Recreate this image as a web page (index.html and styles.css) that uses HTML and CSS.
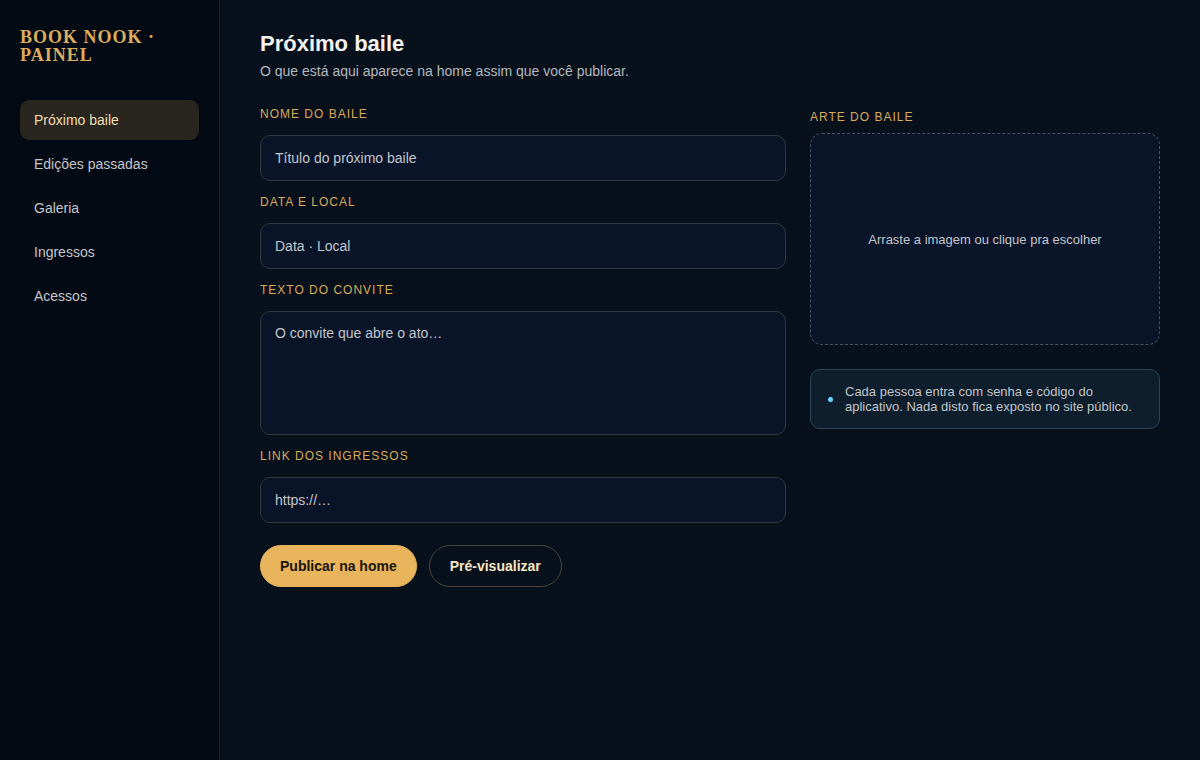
FILE: index.html
```html
<!DOCTYPE html>
<html lang="pt-BR">
<head>
<meta charset="utf-8">
<title>Book Nook · Painel</title>
<link rel="stylesheet" href="styles.css">
</head>
<body>
<div class="app">
  <aside class="sidebar">
    <div class="brand">BOOK NOOK ·<br>PAINEL</div>
    <nav class="nav">
      <a class="nav-item active">Próximo baile</a>
      <a class="nav-item">Edições passadas</a>
      <a class="nav-item">Galeria</a>
      <a class="nav-item">Ingressos</a>
      <a class="nav-item">Acessos</a>
    </nav>
  </aside>
  <main class="main">
    <h1 class="title">Próximo baile</h1>
    <p class="subtitle">O que está aqui aparece na home assim que você publicar.</p>
    <div class="grid">
      <div class="form">
        <div class="field">
          <label class="label">NOME DO BAILE</label>
          <div class="input">Título do próximo baile</div>
        </div>
        <div class="field">
          <label class="label">DATA E LOCAL</label>
          <div class="input">Data · Local</div>
        </div>
        <div class="field">
          <label class="label">TEXTO DO CONVITE</label>
          <div class="input textarea">O convite que abre o ato…</div>
        </div>
        <div class="field">
          <label class="label">LINK DOS INGRESSOS</label>
          <div class="input">https://…</div>
        </div>
        <div class="actions">
          <button class="btn primary">Publicar na home</button>
          <button class="btn ghost">Pré-visualizar</button>
        </div>
      </div>
      <div class="side">
        <label class="label">ARTE DO BAILE</label>
        <div class="dropzone">Arraste a imagem ou clique pra escolher</div>
        <div class="info">
          <span class="dot"></span>
          <span class="info-text">Cada pessoa entra com senha e código do aplicativo. Nada disto fica exposto no site público.</span>
        </div>
      </div>
    </div>
  </main>
</div>
</body>
</html>
```

FILE: styles.css
```css
* { box-sizing: border-box; }
html, body { margin: 0; padding: 0; }
body {
  width: 1200px;
  height: 760px;
  background: #07101b;
  font-family: "Liberation Sans", Arial, sans-serif;
  color: #e8e6e1;
  overflow: hidden;
}
.app { display: flex; height: 760px; }
.sidebar {
  width: 220px;
  flex: none;
  background: #040a14;
  border-right: 1px solid #1a212c;
  padding: 28px 20px 0 20px;
}
.brand {
  font-family: "Liberation Serif", "Times New Roman", serif;
  font-weight: bold;
  font-size: 18px;
  line-height: 18px;
  letter-spacing: 1px;
  color: #dcad5c;
}
.nav {
  display: flex;
  flex-direction: column;
  gap: 4px;
  margin-top: 36px;
}
.nav-item {
  display: flex;
  align-items: center;
  height: 40px;
  padding: 0 14px;
  border-radius: 9px;
  font-size: 14px;
  color: #c4c6cb;
}
.nav-item.active {
  background: #29251f;
  color: #f2deb0;
}
.main {
  flex: 1;
  padding: 30px 40px 0 40px;
}
.title {
  margin: 0;
  font-size: 22px;
  line-height: 28px;
  font-weight: bold;
  color: #f4f2ee;
}
.subtitle {
  margin: 3px 0 0 0;
  font-size: 14px;
  line-height: 20px;
  color: #b4b8bf;
}
.grid {
  display: flex;
  gap: 24px;
  margin-top: 24px;
}
.form { width: 526px; display: flex; flex-direction: column; gap: 12px; }
.side { width: 350px; display: flex; flex-direction: column; padding-top: 3px; }
.field { display: flex; flex-direction: column; gap: 13px; }
.label {
  display: block;
  padding-top: 1px;
  font-size: 12px;
  line-height: 16px;
  letter-spacing: 1px;
  color: #d8aa5c;
}
.input {
  height: 46px;
  border: 1px solid #34373c;
  border-radius: 10px;
  background: #0a1428;
  padding: 0 14px;
  display: flex;
  align-items: center;
  font-size: 14px;
  color: #c2c5cb;
}
.input.textarea {
  height: 124px;
  align-items: flex-start;
  padding-top: 13px;
}
.actions {
  display: flex;
  gap: 12px;
  margin-top: 10px;
}
.btn {
  height: 42px;
  border-radius: 21px;
  font-family: "Liberation Sans", Arial, sans-serif;
  font-size: 14px;
  font-weight: bold;
  padding: 0 19px;
  cursor: pointer;
}
.btn.primary {
  background: #e8b45c;
  border: 1px solid #e8b45c;
  color: #1a140a;
}
.btn.ghost {
  padding: 0 20px;
  background: transparent;
  border: 1px solid #4a4538;
  color: #f4e6c4;
}
.dropzone {
  margin-top: 8px;
  height: 212px;
  border: 1px dashed #4b5260;
  border-radius: 12px;
  background: #0a1529;
  display: flex;
  align-items: center;
  justify-content: center;
  font-size: 13px;
  color: #c2c5cb;
}
.info {
  margin-top: 24px;
  height: 60px;
  border: 1px solid #2a4656;
  border-radius: 10px;
  background: #0e1e2c;
  display: flex;
  align-items: center;
  gap: 12px;
  padding: 0 16px 0 17px;
}
.dot {
  width: 5px;
  height: 5px;
  border-radius: 50%;
  background: #72d2ff;
  flex: none;
}
.info-text {
  font-size: 13px;
  line-height: 15px;
  color: #c2c5cb;
}
```
